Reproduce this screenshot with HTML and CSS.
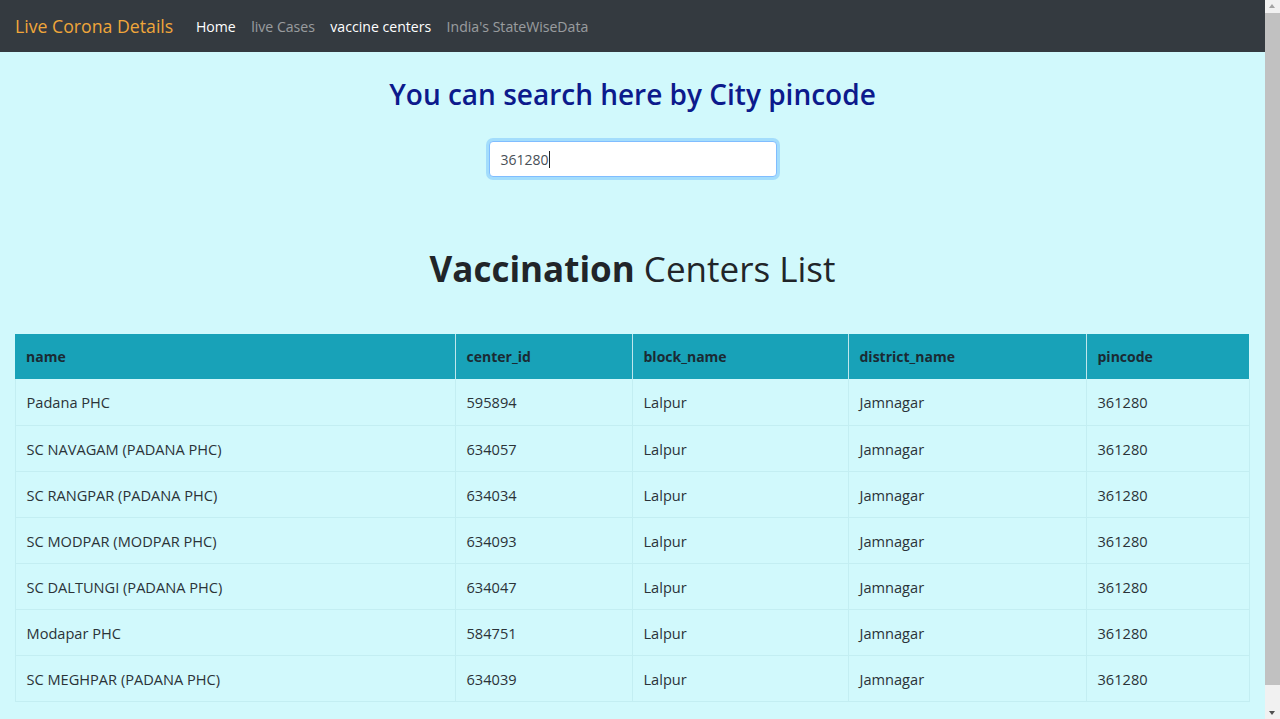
FILE: index.html
```html
<!DOCTYPE html>
<html lang="en">
<head>
<meta charset="utf-8">
<title>Live Corona Details</title>
<link rel="stylesheet" href="styles.css">
</head>
<body>
<div class="app">
  <div class="page">
    <nav class="navbar">
      <a class="brand" href="#">Live Corona Details</a>
      <ul class="nav-links">
        <li><a class="nav-link active" href="#">Home</a></li>
        <li><a class="nav-link" href="#">live Cases</a></li>
        <li><a class="nav-link active" href="#">vaccine centers</a></li>
        <li><a class="nav-link" href="#">India's StateWiseData</a></li>
      </ul>
    </nav>
    <main class="content">
      <h2 class="search-title">You can search here by City pincode</h2>
      <div class="search-box"><span class="search-value">361280</span><span class="caret"></span></div>
      <h1 class="list-title"><b>Vaccination</b> Centers List</h1>
      <div class="table-wrap">
        <table class="centers">
          <colgroup>
            <col class="c1"><col class="c2"><col class="c3"><col class="c4"><col class="c5">
          </colgroup>
          <thead>
            <tr><th>name</th><th>center_id</th><th>block_name</th><th>district_name</th><th>pincode</th></tr>
          </thead>
          <tbody>
            <tr><td>Padana PHC</td><td>595894</td><td>Lalpur</td><td>Jamnagar</td><td>361280</td></tr>
            <tr><td>SC NAVAGAM (PADANA PHC)</td><td>634057</td><td>Lalpur</td><td>Jamnagar</td><td>361280</td></tr>
            <tr><td>SC RANGPAR (PADANA PHC)</td><td>634034</td><td>Lalpur</td><td>Jamnagar</td><td>361280</td></tr>
            <tr><td>SC MODPAR (MODPAR PHC)</td><td>634093</td><td>Lalpur</td><td>Jamnagar</td><td>361280</td></tr>
            <tr><td>SC DALTUNGI (PADANA PHC)</td><td>634047</td><td>Lalpur</td><td>Jamnagar</td><td>361280</td></tr>
            <tr><td>Modapar PHC</td><td>584751</td><td>Lalpur</td><td>Jamnagar</td><td>361280</td></tr>
            <tr><td>SC MEGHPAR (PADANA PHC)</td><td>634039</td><td>Lalpur</td><td>Jamnagar</td><td>361280</td></tr>
          </tbody>
        </table>
      </div>
    </main>
  </div>
  <div class="scrollbar">
    <div class="sb-arrow sb-up"></div>
    <div class="sb-track"><div class="sb-thumb"></div></div>
    <div class="sb-arrow sb-down"></div>
  </div>
</div>
</body>
</html>
```
FILE: styles.css
```css
* { box-sizing: border-box; }
html, body {
  margin: 0;
  padding: 0;
  height: 719px;
  overflow: hidden;
}
body {
  font-family: "Open Sans", "Noto Sans", sans-serif;
  color: #212529;
  background: #d1f9fc;
}
.app {
  display: flex;
  height: 719px;
}
.page {
  flex: 1;
  min-width: 0;
  overflow: hidden;
}
.navbar {
  height: 52px;
  background: #343a40;
  display: flex;
  align-items: center;
  padding: 0 15px;
}
.brand {
  color: #f0a63a;
  font-size: 17.7px;
  text-decoration: none;
  margin-right: 15px;
}
.nav-links {
  list-style: none;
  display: flex;
  margin: 0;
  padding: 0;
}
.nav-link {
  display: block;
  padding: 8px 7.7px;
  font-size: 14.1px;
  color: rgba(255, 255, 255, 0.5);
  text-decoration: none;
}
.nav-link.active { color: #fff; }

.content {
  display: flex;
  flex-direction: column;
  align-items: center;
}
.search-title {
  margin: 24px 0 0;
  font-size: 28px;
  font-weight: 600;
  line-height: 36px;
  color: #0c1a8c;
}
.search-box {
  margin-top: 29px;
  width: 288px;
  height: 36px;
  background: #fff;
  border: 1px solid #80bdff;
  border-radius: 4px;
  box-shadow: 0 0 0 3px rgba(0, 123, 255, 0.22);
  display: flex;
  align-items: center;
  padding: 0 11px;
  font-size: 14px;
  color: #495057;
}
.caret {
  width: 1px;
  height: 17px;
  background: #222;
}
.list-title {
  margin: 69px 0 0;
  font-size: 35px;
  font-weight: 400;
  line-height: 46px;
  color: #212529;
}
.list-title b { font-weight: 700; }
.table-wrap {
  align-self: stretch;
  padding: 42px 15px 0 14.5px;
}
.centers {
  width: 1234px;
  border-collapse: collapse;
  table-layout: fixed;
  font-size: 14px;
}
.c1 { width: 440px; }
.c2 { width: 177px; }
.c3 { width: 216px; }
.c4 { width: 238px; }
.c5 { width: 163px; }
.centers th {
  background: #18a2b8;
  color: #1b2a33;
  font-weight: 700;
  text-align: left;
  height: 45px;
  padding: 0 11px;
  border-left: 1px solid #bfe6ec;
}
.centers th:first-child { border-left: 0; }
.centers td {
  height: 46px;
  padding: 1px 11px 0;
  font-size: 14.6px;
  color: #2b3338;
  border: 1px solid #c3eef2;
  border-top: 0;
}
.centers tbody tr { border-bottom: 1px solid #c3eef2; }

.scrollbar {
  width: 15px;
  background: #f1f1f1;
  display: flex;
  flex-direction: column;
  align-items: center;
}
.sb-arrow {
  height: 12px;
  width: 15px;
  position: relative;
}
.sb-up::after, .sb-down::after {
  content: "";
  position: absolute;
  left: 4px;
  width: 0;
  height: 0;
  border-left: 3.5px solid transparent;
  border-right: 3.5px solid transparent;
}
.sb-up::after { top: 4px; border-bottom: 4px solid #a3a3a3; }
.sb-down::after { top: 4px; border-top: 4px solid #505050; }
.sb-track {
  flex: 1;
  width: 15px;
  display: flex;
  justify-content: center;
  padding: 1px 0 22px;
}
.sb-thumb {
  width: 11px;
  background: #c1c1c1;
  flex: 1;
}
```
